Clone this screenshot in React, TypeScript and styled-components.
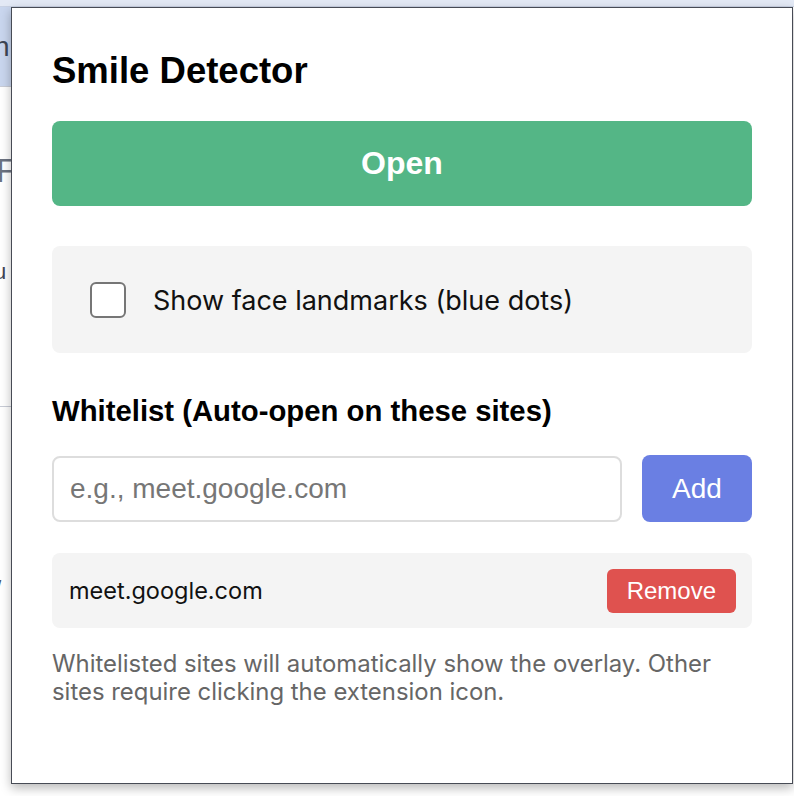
import React from "react";
import styled, { createGlobalStyle } from "styled-components";

const GlobalStyle = createGlobalStyle`
  html, body { margin: 0; padding: 0; background: #ffffff; }
  * { box-sizing: border-box; }
`;

const Page = styled.div`
  width: 794px;
  height: 796px;
  overflow: hidden;
  display: grid;
  grid-template-columns: 11px 782px 1fr;
  grid-template-rows: 7px 777px 1fr;
  background: #ffffff;
`;

const TopStrip = styled.div`
  grid-column: 1 / -1;
  background: #e3e9f5;
  border-bottom: 1px solid #c9d2e4;
`;

const SideStrip = styled.div`
  display: flex;
  flex-direction: column;
  overflow: hidden;
  font-family: "Liberation Sans", Arial, sans-serif;
  color: #3f4654;
`;

const SideBlock = styled.div<{ $h: number; $bg?: string; $line?: boolean }>`
  height: ${(p) => p.$h}px;
  flex: none;
  background: ${(p) => p.$bg || "#ffffff"};
  border-bottom: ${(p) => (p.$line ? "1px solid #c8ccd6" : "none")};
  display: flex;
  align-items: center;
  line-height: 1;
  white-space: nowrap;
`;

const Glyph = styled.span<{ $x: number; $size: number; $color?: string }>`
  margin-left: ${(p) => p.$x}px;
  font-size: ${(p) => p.$size}px;
  color: ${(p) => p.$color || "#3f4654"};
`;

const Popup = styled.div`
  grid-column: 2;
  grid-row: 2;
  background: #ffffff;
  border: 1px solid #474b55;
  box-shadow: 0 4px 10px rgba(0, 0, 0, 0.28);
  padding: 42px 40px 0 40px;
  display: flex;
  flex-direction: column;
  position: relative;
  z-index: 1;
`;

const Title = styled.h1`
  margin: 0;
  font-family: "Liberation Sans", Arial, sans-serif;
  font-weight: 700;
  font-size: 36.5px;
  line-height: 41px;
  color: #000000;
`;

const OpenButton = styled.button`
  margin-top: 30px;
  height: 85px;
  width: 100%;
  border: none;
  border-radius: 8px;
  background: #54b686;
  color: #ffffff;
  font-family: "Liberation Sans", Arial, sans-serif;
  font-weight: 700;
  font-size: 32px;
  cursor: pointer;
`;

const OptionPanel = styled.label`
  margin-top: 40px;
  height: 107px;
  background: #f4f4f4;
  border-radius: 8px;
  display: flex;
  align-items: center;
  gap: 27px;
  padding: 0 38px;
  cursor: pointer;
`;

const Checkbox = styled.input`
  appearance: none;
  -webkit-appearance: none;
  margin: 0;
  width: 36px;
  height: 36px;
  border: 2px solid #767676;
  border-radius: 6px;
  background: #ffffff;
  flex: none;
`;

const OptionText = styled.span`
  font-family: Inter, "Noto Sans", sans-serif;
  font-size: 27px;
  line-height: 34px;
  padding-top: 2px;
  color: #111111;
`;

const SectionTitle = styled.h2`
  margin: 41px 0 0 0;
  font-family: "Liberation Sans", Arial, sans-serif;
  font-weight: 700;
  font-size: 29.3px;
  line-height: 34px;
  color: #000000;
`;

const AddRow = styled.div`
  margin-top: 27px;
  display: flex;
  gap: 20px;
  align-items: flex-start;
`;

const SiteInput = styled.input`
  flex: 1;
  height: 66px;
  margin-top: 1px;
  border: 2px solid #dddddd;
  border-radius: 8px;
  padding: 0 16px;
  font-family: "Liberation Sans", Arial, sans-serif;
  font-size: 28px;
  color: #111111;
  outline: none;
  &::placeholder {
    color: #767676;
  }
`;

const AddButton = styled.button`
  width: 110px;
  height: 67px;
  border: none;
  border-radius: 8px;
  background: #6a7fe3;
  color: #ffffff;
  font-family: "Liberation Sans", Arial, sans-serif;
  font-size: 28px;
  cursor: pointer;
`;

const SiteItem = styled.div`
  margin-top: 31px;
  height: 75px;
  background: #f4f4f4;
  border-radius: 8px;
  display: flex;
  align-items: center;
  justify-content: space-between;
  padding: 0 16px 0 17px;
`;

const SiteName = styled.span`
  font-family: Inter, "Noto Sans", sans-serif;
  font-size: 23.5px;
  color: #111111;
`;

const RemoveButton = styled.button`
  height: 44px;
  padding: 0 20px;
  border: none;
  border-radius: 6px;
  background: #df524f;
  color: #ffffff;
  font-family: "Liberation Sans", Arial, sans-serif;
  font-size: 24px;
  cursor: pointer;
`;

const HelpText = styled.p`
  margin: 22px 0 0 0;
  font-family: Inter, "Noto Sans", sans-serif;
  font-size: 23.9px;
  line-height: 28px;
  color: #666666;
`;

export default function App() {
  return (
    <>
      <GlobalStyle />
      <Page>
        <TopStrip />
        <SideStrip>
          <SideBlock $h={80} $bg="#c9d6ee" $line>
            <Glyph $x={-6} $size={28}>n</Glyph>
          </SideBlock>
          <SideBlock $h={166}>
            <Glyph $x={-4} $size={34} $color="#6b7280">F</Glyph>
          </SideBlock>
          <SideBlock $h={38}>
            <Glyph $x={-6} $size={22}>u</Glyph>
          </SideBlock>
          <SideBlock $h={116} $line />
          <SideBlock $h={366}>
            <Glyph $x={-6} $size={26} $color="#4b5563">/</Glyph>
          </SideBlock>
        </SideStrip>
        <Popup>
          <Title>Smile Detector</Title>
          <OpenButton>Open</OpenButton>
          <OptionPanel>
            <Checkbox type="checkbox" />
            <OptionText>Show face landmarks (blue dots)</OptionText>
          </OptionPanel>
          <SectionTitle>Whitelist (Auto-open on these sites)</SectionTitle>
          <AddRow>
            <SiteInput placeholder="e.g., meet.google.com" />
            <AddButton>Add</AddButton>
          </AddRow>
          <SiteItem>
            <SiteName>meet.google.com</SiteName>
            <RemoveButton>Remove</RemoveButton>
          </SiteItem>
          <HelpText>
            Whitelisted sites will automatically show the overlay. Other sites
            require clicking the extension icon.
          </HelpText>
        </Popup>
      </Page>
    </>
  );
}
